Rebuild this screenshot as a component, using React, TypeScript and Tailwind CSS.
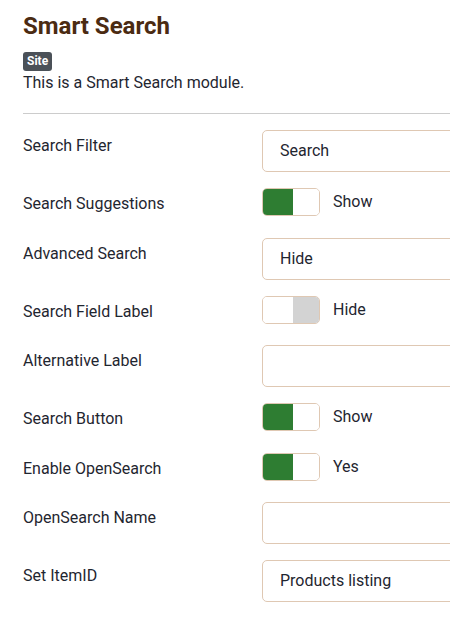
const rows: (
  | { kind: "input"; label: string; value: string }
  | { kind: "toggle"; label: string; on: boolean; text: string }
)[] = [
  { kind: "input", label: "Search Filter", value: "Search" },
  { kind: "toggle", label: "Search Suggestions", on: true, text: "Show" },
  { kind: "input", label: "Advanced Search", value: "Hide" },
  { kind: "toggle", label: "Search Field Label", on: false, text: "Hide" },
  { kind: "input", label: "Alternative Label", value: "" },
  { kind: "toggle", label: "Search Button", on: true, text: "Show" },
  { kind: "toggle", label: "Enable OpenSearch", on: true, text: "Yes" },
  { kind: "input", label: "OpenSearch Name", value: "" },
  { kind: "input", label: "Set ItemID", value: "Products listing" },
];

function Toggle({ on }: { on: boolean }) {
  return (
    <div className="flex h-[28px] w-[58px] overflow-hidden rounded-[5px] border border-[#dfc8b3] bg-white">
      <div className={on ? "w-[30px] bg-[#2e7d32]" : "w-[30px] bg-white"} />
      <div className={on ? "flex-1 bg-white" : "flex-1 bg-[#d3d3d3]"} />
    </div>
  );
}

export default function App() {
  return (
    <div
      className="h-[644px] w-[450px] overflow-hidden bg-white text-[#1f2630]"
      style={{ fontFamily: "Roboto, 'Liberation Sans', sans-serif" }}
    >
      <div className="w-[700px] pl-[23px] pt-[10px]">
        <h1 className="text-[24px] font-bold leading-[32px] text-[#4b2b12]">Smart Search</h1>
        <div className="mt-[10px] flex">
          <span className="rounded-[3px] bg-[#4b5158] px-[4px] text-[12px] font-bold leading-[19px] text-white">
            Site
          </span>
        </div>
        <p className="text-[16px] leading-[24px]">This is a Smart Search module.</p>
        <hr className="mt-[18px] border-t border-[#cccccc]" />

        <div className="mt-[16px]">
          {rows.map((r) =>
            r.kind === "input" ? (
              <div key={r.label} className="mb-[16px] flex">
                <div className="w-[239px] pt-[4px] text-[16px] leading-[24px]">{r.label}</div>
                <div className="flex h-[42px] flex-1 items-center rounded-[5px] border border-[#dfc8b3] px-[17px] text-[16px]">
                  {r.value}
                </div>
              </div>
            ) : (
              <div key={r.label} className="mb-[21.5px] flex h-[28px] items-center">
                <div className="w-[239px] pt-[4px] text-[16px] leading-[24px]">{r.label}</div>
                <Toggle on={r.on} />
                <span className="ml-[13px] text-[16px] leading-[24px]">{r.text}</span>
              </div>
            )
          )}
        </div>
      </div>
    </div>
  );
}
